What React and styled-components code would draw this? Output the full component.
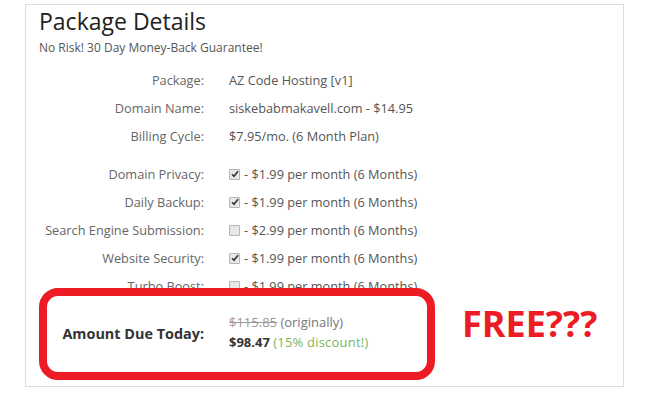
import React from "react";
import styled, { createGlobalStyle } from "styled-components";

const Global = createGlobalStyle`
  html, body { margin: 0; padding: 0; background: #fff; }
  body { font-family: "Open Sans", "Liberation Sans", sans-serif; }
`;

const Panel = styled.div`
  position: relative;
  margin: 4px 0 0 25px;
  border: 1px solid #dddddd;
  padding: 2px 0 34px 13px;
  box-sizing: content-box;
  width: 584px;
`;

const Title = styled.h2`
  margin: 0;
  font-size: 23px;
  line-height: 29px;
  font-weight: 400;
  color: #222;
`;

const Subtitle = styled.div`
  margin-top: 3px;
  font-size: 12px;
  line-height: 18px;
  color: #555;
`;

const Group = styled.div`
  display: grid;
  grid-template-columns: 165px 1fr;
  column-gap: 25px;
  margin-top: ${(p) => p.$top}px;
`;

const Label = styled.div`
  text-align: right;
  font-size: 12.75px;
  line-height: 28px;
  color: #666;
  white-space: nowrap;
`;

const Value = styled.div`
  font-size: 12.75px;
  line-height: 28px;
  color: #555;
  white-space: nowrap;
  display: flex;
  align-items: center;
`;

const Box = styled.span`
  display: inline-flex;
  align-items: center;
  justify-content: center;
  width: 9px;
  height: 9px;
  border: 1px solid #b5b5b5;
  border-radius: 1px;
  background: #e8e8e8;
  margin-right: 4px;
  flex: none;
`;

const AmountRow = styled.div`
  position: relative;
  display: grid;
  grid-template-columns: 165px 1fr;
  column-gap: 25px;
  align-items: center;
  margin-top: 12px;
`;

const AmountLabel = styled.div`
  text-align: right;
  font-size: 14.4px;
  line-height: 20px;
  font-weight: 700;
  color: #333;
  padding-top: 3px;
  white-space: nowrap;
`;

const AmountLines = styled.div`
  font-size: 13px;
  line-height: 20px;
  color: #777;
  white-space: nowrap;
`;

const Old = styled.span`
  text-decoration: line-through;
  color: #999;
`;

const Now = styled.span`
  font-weight: 700;
  color: #333;
`;

const Discount = styled.span`
  color: #7ab55c;
  letter-spacing: 0.2px;
`;

const Ring = styled.div`
  position: absolute;
  left: 0;
  top: -24px;
  width: 396px;
  height: 92px;
  box-sizing: border-box;
  border: 8px solid #ed1c24;
  border-radius: 19px;
  pointer-events: none;
`;

const Free = styled.div`
  position: absolute;
  left: 423px;
  top: -8px;
  font-size: 36px;
  line-height: 40px;
  font-weight: 700;
  color: #ed1c24;
`;

const Check = ({ on }) => (
  <Box>
    {on && (
      <svg width="8" height="8" viewBox="0 0 8 8">
        <path d="M1 4.2 L3 6.3 L7 1.2" stroke="#333" strokeWidth="1.6" fill="none" />
      </svg>
    )}
  </Box>
);

const info = [
  ["Package:", "AZ Code Hosting [v1]"],
  ["Domain Name:", "siskebabmakavell.com - $14.95"],
  ["Billing Cycle:", "$7.95/mo. (6 Month Plan)"],
];

const addons = [
  ["Domain Privacy:", true, "$1.99"],
  ["Daily Backup:", true, "$1.99"],
  ["Search Engine Submission:", false, "$2.99"],
  ["Website Security:", true, "$1.99"],
  ["Turbo Boost:", false, "$1.99"],
];

export default function App() {
  return (
    <>
      <Global />
      <Panel>
        <Title>Package Details</Title>
        <Subtitle>No Risk! 30 Day Money-Back Guarantee!</Subtitle>
        <Group $top={9}>
          {info.map(([l, v]) => (
            <React.Fragment key={l}>
              <Label>{l}</Label>
              <Value>{v}</Value>
            </React.Fragment>
          ))}
        </Group>
        <Group $top={10}>
          {addons.map(([l, on, p]) => (
            <React.Fragment key={l}>
              <Label>{l}</Label>
              <Value>
                <Check on={on} />- {p} per month (6 Months)
              </Value>
            </React.Fragment>
          ))}
        </Group>
        <AmountRow>
          <AmountLabel>Amount Due Today:</AmountLabel>
          <AmountLines>
            <div>
              <Old>$115.85</Old> (originally)
            </div>
            <div>
              <Now>$98.47</Now> <Discount>(15% discount!)</Discount>
            </div>
          </AmountLines>
          <Ring />
          <Free>FREE???</Free>
        </AmountRow>
      </Panel>
    </>
  );
}
